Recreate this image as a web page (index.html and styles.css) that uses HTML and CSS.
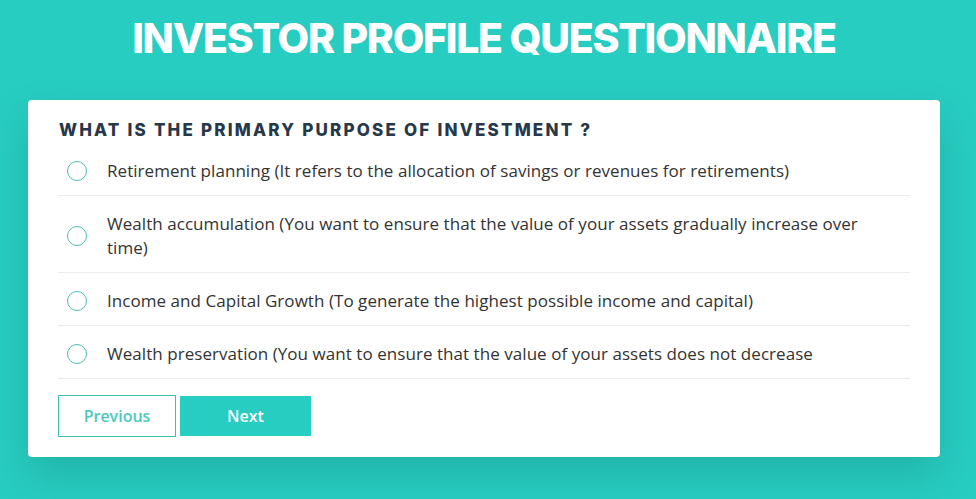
FILE: index.html
```html
<!DOCTYPE html>
<html lang="en">
<head>
<meta charset="utf-8">
<title>Investor Profile Questionnaire</title>
<link rel="stylesheet" href="styles.css">
</head>
<body>
<div class="page">
  <h1 class="title">INVESTOR PROFILE QUESTIONNAIRE</h1>
  <form class="card">
    <h2 class="question">WHAT IS THE PRIMARY PURPOSE OF INVESTMENT ?</h2>
    <ul class="options">
      <li class="option"><span class="radio"></span><span class="label">Retirement planning (It refers to the allocation of savings or revenues for retirements)</span></li>
      <li class="option"><span class="radio"></span><span class="label">Wealth accumulation (You want to ensure that the value of your assets gradually increase over time)</span></li>
      <li class="option"><span class="radio"></span><span class="label">Income and Capital Growth (To generate the highest possible income and capital)</span></li>
      <li class="option"><span class="radio"></span><span class="label">Wealth preservation (You want to ensure that the value of your assets does not decrease</span></li>
    </ul>
    <div class="actions">
      <button type="button" class="btn btn-outline">Previous</button>
      <button type="button" class="btn btn-fill">Next</button>
    </div>
  </form>
</div>
</body>
</html>
```
FILE: styles.css
```css
* { box-sizing: border-box; }
html, body { margin: 0; padding: 0; }
body {
  background: #28cdc2;
  font-family: "Open Sans", "Liberation Sans", sans-serif;
  color: #2b2b2b;
  height: 499px;
  overflow: hidden;
}
.page {
  width: 968px;
  padding-top: 13px;
}
.title {
  margin: 0;
  text-align: center;
  color: #fff;
  font-family: "Inter", "Liberation Sans", sans-serif;
  font-weight: 800;
  font-size: 41px;
  line-height: 50px;
  letter-spacing: -1.3px;
}
.card {
  margin: 37px 28px 0;
  background: #fff;
  border-radius: 4px;
  padding: 19px 30px 20px;
  box-shadow: 0 18px 40px rgba(0, 60, 55, 0.18);
}
.question {
  margin: 0;
  padding-left: 1px;
  font-family: "Inter", "Liberation Sans", sans-serif;
  font-weight: 800;
  font-size: 17px;
  line-height: 22px;
  letter-spacing: 2.2px;
  color: #27384a;
}
.options {
  list-style: none;
  margin: 2px 0 0;
  padding: 0;
}
.option {
  display: flex;
  align-items: center;
  gap: 20px;
  padding: 16px 30px 12px 9px;
  border-bottom: 1px solid #ececec;
  font-size: 17px;
  line-height: 24px;
}
.radio {
  flex: 0 0 20px;
  width: 20px;
  height: 20px;
  border-radius: 50%;
  border: 1px solid #4fbcb2;
}
.label { color: #333; letter-spacing: 0.05px; }
.actions {
  display: flex;
  gap: 4px;
  margin-top: 16px;
  align-items: center;
}
.btn {
  font-family: "Open Sans", "Liberation Sans", sans-serif;
  font-size: 16px;
  font-weight: 600;
  cursor: pointer;
}
.btn-outline {
  width: 118px;
  height: 42px;
  background: #fff;
  color: #4cc9bd;
  border: 1px solid #3dbfb3;
}
.btn-fill {
  width: 131px;
  height: 40px;
  background: #28cdc2;
  color: #fff;
  border: none;
}
```
